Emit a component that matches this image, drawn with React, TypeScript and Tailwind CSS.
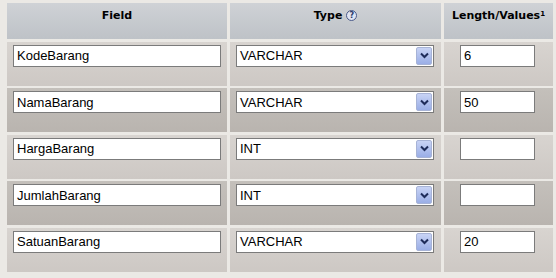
const rows = [
  { name: 'KodeBarang', type: 'VARCHAR', len: '6' },
  { name: 'NamaBarang', type: 'VARCHAR', len: '50' },
  { name: 'HargaBarang', type: 'INT', len: '' },
  { name: 'JumlahBarang', type: 'INT', len: '' },
  { name: 'SatuanBarang', type: 'VARCHAR', len: '20' },
];

function SelectBox({ value }: { value: string }) {
  return (
    <div className="flex h-[22px] w-[198px] items-center border border-[#7b7b7b] bg-white pl-[3px] pr-[1px]">
      <span className="flex-1 text-[13px] leading-none text-black">{value}</span>
      <span className="flex h-[18px] w-[16px] items-center justify-center rounded-[2px] border border-[#a7b3d6] bg-gradient-to-b from-[#c8d3f5] to-[#9aaee6]">
        <svg width="9" height="7" viewBox="0 0 9 7">
          <path d="M1 1.5 L4.5 5 L8 1.5" fill="none" stroke="#1e2c5a" strokeWidth="2" />
        </svg>
      </span>
    </div>
  );
}

function TextBox({ value, w }: { value: string; w: string }) {
  return (
    <div className={`flex h-[22px] ${w} items-center border border-[#7b7b7b] bg-white px-[3px] text-[13px] leading-none text-black`}>
      {value}
    </div>
  );
}

function HeaderCell({ children }: { children: React.ReactNode }) {
  return (
    <div className="flex justify-center bg-gradient-to-b from-[#cfd2d6] to-[#bec2c7] pt-[5px] text-[11px] font-bold text-black">
      {children}
    </div>
  );
}

export default function App() {
  return (
    <div
      className="h-[278px] w-[556px] bg-[#ebe9e5] pl-[7px] pt-[3px]"
      style={{ fontFamily: '"Liberation Sans", Arial, sans-serif' }}
    >
      <div className="grid grid-cols-[220px_211px_109px] gap-x-[3px] gap-y-[2.5px]">
        <div className="contents" style={{ fontFamily: '"DejaVu Sans", Verdana, sans-serif' }}>
          <div className="col-span-3 grid h-[36px] grid-cols-[220px_211px_109px] gap-x-[3px]" style={{ fontFamily: '"DejaVu Sans", Verdana, sans-serif' }}>
            <HeaderCell>Field</HeaderCell>
            <HeaderCell>
              <span className="flex items-start gap-[4px]">
                Type
                <span className="mt-[2px] flex h-[11px] w-[11px] items-center justify-center rounded-full border border-[#4a5a8a] bg-[#dfe4f2] text-[8px] leading-none text-[#2a3a6a]">
                  ?
                </span>
              </span>
            </HeaderCell>
            <HeaderCell>
              <span>
                Length/Values<sup className="text-[7px]">1</sup>
              </span>
            </HeaderCell>
          </div>
        </div>
        {rows.map((r, i) => {
          const bg = i % 2 === 0 ? 'from-[#d8d4d0] to-[#cdc8c4]' : 'from-[#c4c0bb] to-[#b9b4af]';
          return (
            <div key={r.name} className="col-span-3 grid h-[44px] grid-cols-[220px_211px_109px] gap-x-[3px]">
              <div className={`bg-gradient-to-b ${bg} pl-[6px] pt-[3px]`}>
                <TextBox value={r.name} w="w-[208px]" />
              </div>
              <div className={`bg-gradient-to-b ${bg} pl-[6px] pt-[3px]`}>
                <SelectBox value={r.type} />
              </div>
              <div className={`bg-gradient-to-b ${bg} pl-[16px] pt-[3px]`}>
                <TextBox value={r.len} w="w-[75px]" />
              </div>
            </div>
          );
        })}
      </div>
    </div>
  );
}
